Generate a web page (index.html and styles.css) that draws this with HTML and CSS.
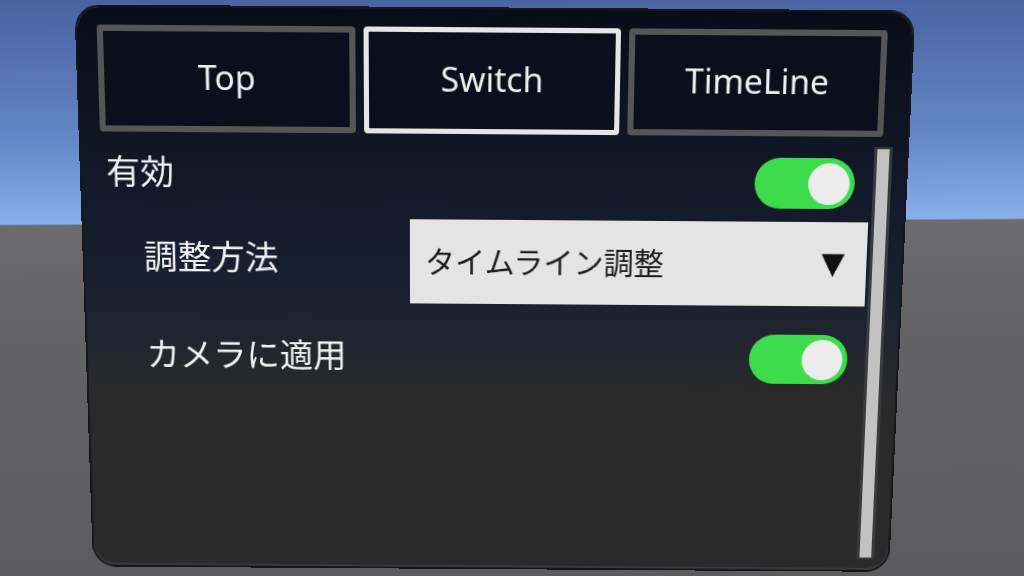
FILE: index.html
```html
<!DOCTYPE html>
<html lang="ja">
<head>
  <meta charset="UTF-8" />
  <title>Camera Switch</title>
  <link rel="stylesheet" href="styles.css">
</head>
<body>
  <div class="scene">
    <div class="panel">
      <div class="tabs">
        <div class="tab">Top</div>
        <div class="tab active">Switch</div>
        <div class="tab">TimeLine</div>
      </div>

      <div class="body">
        <div class="content">
          <div class="row row-enable">
            <span class="label">有効</span>
            <div class="toggle on"><div class="knob"></div></div>
          </div>

          <div class="row row-method">
            <span class="label sub">調整方法</span>
            <div class="dropdown">
              <span>タイムライン調整</span>
              <span class="arrow">▼</span>
            </div>
          </div>

          <div class="row row-camera">
            <span class="label sub">カメラに適用</span>
            <div class="toggle on"><div class="knob"></div></div>
          </div>
        </div>

        <div class="scrollbar"><div class="handle"></div></div>
      </div>
    </div>
  </div>
</body>
</html>
```

FILE: styles.css
```css
body { margin: 0; font-family: "Noto Sans", "Noto Sans CJK JP", sans-serif; }

/* world behind the panel: sky + grey floor */
.scene {
  width: 1024px; height: 576px; overflow: hidden;
  background: linear-gradient(179.66deg, #4a62a0 0px, #6486c6 140px, #88b0ea 224px, #6c6c6e 226px, #636365 330px, #5c5c5e 576px);
  padding-top: 16px;
  box-sizing: border-box;
}

/* the floating canvas, seen slightly from below */
.panel {
  width: 814px; height: 560px;
  margin-left: 86px;
  border-radius: 22px;
  background: linear-gradient(to bottom, #090d17 0px, #101624 130px, #192030 270px, #23262e 335px, #2a2a2a 380px, #2a2a2a 100%);
  box-shadow: 0 0 0 2px #15171c, inset 0 -2px 0 #3a3a3a;
  padding: 17px 14px 11px 19px;
  box-sizing: border-box;
  display: flex; flex-direction: column;
  transform: perspective(1000px) rotateX(-5.6deg) rotateZ(0.4deg);
}

.tabs {
  display: grid; grid-template-columns: repeat(3, 1fr); gap: 8px;
  height: 103px; margin-right: 10px;
}
.tab {
  border: 6px solid #555658;
  border-radius: 4px;
  background: #0b0f1b;
  color: #f0f0f0;
  font-size: 33px;
  display: flex; align-items: center; justify-content: center;
  padding-bottom: 4px;
  box-sizing: border-box;
}
.tab.active { border: 5px solid #e6e6e6; }

.body { flex: 1; display: flex; gap: 3px; margin-top: 10px; }
.content { flex: 1; }

.row { display: flex; align-items: center; justify-content: space-between; }
.row-enable { height: 72px; }
.row-method { height: 88px; }
.row-camera { height: 104px; }

.label { color: #f2f2f2; font-size: 33.5px; padding-left: 5px; }
.label.sub { padding-left: 40px; }
.row-enable .label { margin-top: -19px; }
.row-method .label { margin-top: -11px; }
.row-camera .label { margin-top: -7px; }

.toggle {
  width: 99px; height: 50px; border-radius: 25px;
  background: #3ddc4c;
  display: flex; align-items: center; justify-content: flex-end;
  padding: 0 5px; box-sizing: border-box;
  margin-right: 15px;
}
.knob { width: 41px; height: 41px; border-radius: 50%; background: #ececec; }

.dropdown {
  width: 455px; height: 84px;
  background: #e4e4e4;
  color: #1e1e1e;
  font-size: 30px;
  display: flex; align-items: center; justify-content: space-between;
  padding: 0 22px 4px 15px; box-sizing: border-box;
}
.dropdown .arrow { font-size: 30px; color: #111; font-family: "DejaVu Sans", sans-serif; }

.scrollbar {
  width: 18px;
  background: #3a3b3e;
  padding: 2px 3px; box-sizing: border-box;
}
.handle { height: 100%; background: #c2c2c2; }
```
